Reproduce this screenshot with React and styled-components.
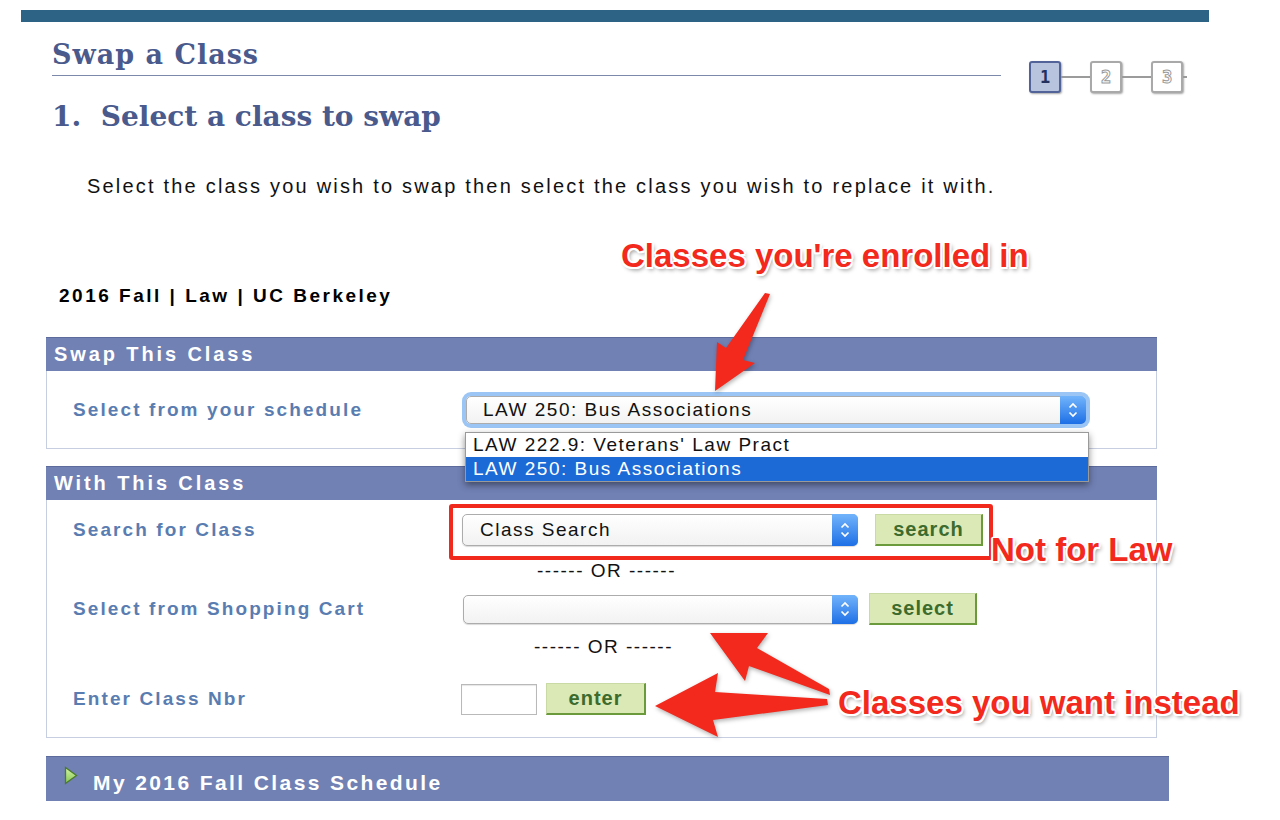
import React from 'react';
import styled, { createGlobalStyle } from 'styled-components';

const GlobalStyle = createGlobalStyle`
body {
  margin: 0;
  background: #ffffff;
  font-family: "Liberation Sans", Arial, sans-serif;
}
`

const Page = styled.div`
position: relative;
box-sizing: border-box;
width: 1280px;
height: 820px;
padding-top: 10px;
overflow: hidden;
`

const TopBar = styled.div`
margin-left: 21px;
width: 1188px;
height: 12px;
background: #2d6384;
`

const Content = styled.div`
margin-left: 46px;
`

const HeaderRow = styled.div`
display: flex;
align-items: flex-start;
margin-left: 6px;
`

const TitleBlock = styled.div`
width: 949px;
padding: 17px 0 4px;
border-bottom: 1px solid #7c89ab;
font-family: "DejaVu Serif", Georgia, serif;
font-weight: bold;
font-size: 27px;
letter-spacing: 1px;
line-height: 32px;
color: #4a5a8c;
`

const Steps = styled.div`
display: flex;
align-items: center;
margin: 39px 0 0 28px;
`

const StepBox = styled.div`
box-sizing: border-box;
width: 32px;
height: 32px;
display: flex;
align-items: center;
justify-content: center;
border: 2px solid ${p => (p.$active ? '#52639a' : '#a9a9a9')};
border-radius: 3px;
background: ${p => (p.$active ? '#b8c4dd' : '#ffffff')};
box-shadow: 1px 1px 2px rgba(0, 0, 0, 0.35);
font-family: "DejaVu Sans Mono", monospace;
font-weight: bold;
font-size: 17px;
color: ${p => (p.$active ? '#24315f' : '#ffffff')};
-webkit-text-stroke: ${p => (p.$active ? '0' : '1px #9a9a9a')};
`

const StepLine = styled.div`
width: ${p => p.$w}px;
height: 2px;
background: #9b9b9b;
`

const PageTitle = styled.h1`
margin: 6px 0 0 6px;
font-family: "DejaVu Serif", Georgia, serif;
font-weight: bold;
font-size: 28px;
line-height: 36px;
color: #4a5a8c;
`

const Instructions = styled.p`
margin: 39px 0 0 41px;
font-size: 20px;
line-height: 24px;
letter-spacing: 2.2px;
color: #111111;
`

const Term = styled.div`
margin: 86px 0 0 13px;
font-weight: bold;
font-size: 19px;
line-height: 24px;
letter-spacing: 2.5px;
color: #000000;
`

const Panel = styled.section`
width: ${p => p.$w}px;
margin-top: ${p => p.$mt}px;
`

const PanelHeader = styled.div`
box-sizing: border-box;
height: ${p => p.$h || 34}px;
display: flex;
align-items: center;
padding-left: 8px;
background: #7181b4;
border-top: 1px solid #5d6b9c;
color: #ffffff;
font-weight: bold;
font-size: 20px;
letter-spacing: 2.9px;
`

const PanelBody = styled.div`
display: flex;
flex-direction: column;
padding: ${p => p.$pad || '0'};
border: 1px solid #c7cee1;
border-top: none;
`

const Row = styled.div`
display: grid;
grid-template-columns: 415px 1fr;
align-items: center;
height: ${p => p.$h}px;
`

const Label = styled.div`
padding-left: 26px;
font-weight: bold;
font-size: 19px;
letter-spacing: 2.1px;
color: #5a7db1;
`

const Controls = styled.div`
position: relative;
display: flex;
align-items: center;
`

const OrLine = styled.div`
height: 30px;
line-height: 30px;
padding-left: ${p => 415 + p.$indent}px;
font-size: 19px;
letter-spacing: 1.5px;
color: #111111;
`

const SelectBox = styled.div`
box-sizing: border-box;
display: flex;
align-items: center;
width: ${p => p.$w}px;
height: ${p => p.$h}px;
margin-left: ${p => p.$ml || 0}px;
border: 1px solid #acacac;
border-radius: 5px;
background: linear-gradient(#ffffff, #f2f2f2);
box-shadow: ${p =>
  p.$focus ? '0 0 0 4px #9bc5f4' : '0 1px 1px rgba(0, 0, 0, 0.15)'};
font-size: 19px;
letter-spacing: 1.5px;
color: #111111;
`

const SelectText = styled.span`
flex: 1;
padding-left: ${p => p.$pl || 16}px;
white-space: nowrap;
`

const Stepper = styled.div`
align-self: stretch;
width: 26px;
display: flex;
align-items: center;
justify-content: center;
margin: -1px -1px -1px 0;
border-radius: 0 5px 5px 0;
background: linear-gradient(#72b4fb, #1d6fe6);
`

const Menu = styled.div`
position: absolute;
top: 36px;
left: 3px;
width: 622px;
background: #ffffff;
border: 1px solid #9a9a9a;
box-shadow: 0 3px 7px rgba(0, 0, 0, 0.45);
z-index: 2;
`

const MenuItem = styled.div`
height: 24px;
line-height: 24px;
padding-left: 7px;
font-size: 19px;
letter-spacing: 1.5px;
color: ${p => (p.$selected ? '#ffffff' : '#111111')};
background: ${p => (p.$selected ? '#1b6ad6' : '#ffffff')};
`

const GreenButton = styled.div`
box-sizing: border-box;
display: flex;
align-items: center;
justify-content: center;
width: ${p => p.$w}px;
height: 32px;
margin-left: ${p => p.$ml}px;
background: #dae9b6;
border: 1px solid #c9daa4;
border-right: 2px solid #6b9a3d;
border-bottom: 2px solid #6b9a3d;
color: #3d6b2d;
font-weight: bold;
font-size: 20px;
letter-spacing: 1px;
`

const NumberInput = styled.div`
box-sizing: border-box;
width: 76px;
height: 31px;
margin-left: -1px;
border: 1px solid #b9b9b9;
box-shadow: inset 0 1px 1px rgba(0, 0, 0, 0.1);
background: #ffffff;
`

const ScheduleBar = styled.div`
box-sizing: border-box;
display: flex;
align-items: flex-start;
width: 1123px;
height: 45px;
margin-top: 18px;
padding: 9px 0 0 18px;
background: #7181b4;
border-top: 1px solid #5d6b9c;
`

const ScheduleTitle = styled.span`
margin: 5px 0 0 15px;
line-height: 24px;
color: #ffffff;
font-weight: bold;
font-size: 21px;
letter-spacing: 2.4px;
`

/* red call-outs drawn on top of the form */
const Overlay = styled.div`
position: absolute;
inset: 0;
pointer-events: none;
z-index: 5;
`

const RedFrame = styled.div`
position: absolute;
left: 449px;
top: 504px;
width: 544px;
height: 56px;
box-sizing: border-box;
border: 4px solid #f1291d;
border-radius: 3px;
`

const Callout = styled.div`
position: absolute;
left: ${p => p.$x}px;
top: ${p => p.$y}px;
line-height: 40px;
white-space: nowrap;
font-weight: bold;
font-size: 33px;
color: #f2291c;
text-shadow: -1.5px -1.5px 0 #fff, 1.5px -1.5px 0 #fff, -1.5px 1.5px 0 #fff,
  1.5px 1.5px 0 #fff, 0 2px 0 #fff, 0 -2px 0 #fff, 2px 0 0 #fff, -2px 0 0 #fff,
  2px 3px 4px rgba(0, 0, 0, 0.45);
`

const ArrowLayer = styled.svg`
position: absolute;
left: 0;
top: 0;
filter: drop-shadow(1px 2px 2px rgba(0, 0, 0, 0.3));
`

const Chevrons = () => (
  <svg width="14" height="22" viewBox="0 0 14 22">
    <path d="M3.5 8.5 L7 5 L10.5 8.5" stroke="#fff" strokeWidth="1.7" fill="none" />
    <path d="M3.5 13.5 L7 17 L10.5 13.5" stroke="#fff" strokeWidth="1.7" fill="none" />
  </svg>
)

const Select = ({ text, w, h, ml, focus, pl }) => (
  <SelectBox $w={w} $h={h} $ml={ml} $focus={focus}>
    <SelectText $pl={pl}>{text}</SelectText>
    <Stepper><Chevrons /></Stepper>
  </SelectBox>
)

const ExpandIcon = () => (
  <svg width="14" height="19" viewBox="0 0 14 19">
    <defs>
      <linearGradient id="tri" x1="0" y1="0" x2="0" y2="1">
        <stop offset="0" stopColor="#d4f5a6" />
        <stop offset="1" stopColor="#86c652" />
      </linearGradient>
    </defs>
    <polygon points="1.5,1.5 12.5,9.5 1.5,17.5" fill="url(#tri)" stroke="#4b7a2f" strokeWidth="1.3" />
  </svg>
)

const App = () => {
  return (
    <>
      <GlobalStyle />
      <Page>
        <TopBar />
        <Content>
          <HeaderRow>
            <TitleBlock>Swap a Class</TitleBlock>
            <Steps>
              <StepBox $active>1</StepBox>
              <StepLine $w={29} />
              <StepBox>2</StepBox>
              <StepLine $w={29} />
              <StepBox>3</StepBox>
              <StepLine $w={4} />
            </Steps>
          </HeaderRow>
          <PageTitle>1.&nbsp; Select a class to swap</PageTitle>
          <Instructions>
            Select the class you wish to swap then select the class you wish to replace it with.
          </Instructions>
          <Term>2016 Fall | Law | UC Berkeley</Term>

          <Panel $w={1111} $mt={29}>
            <PanelHeader>Swap This Class</PanelHeader>
            <PanelBody>
              <Row $h={77}>
                <Label>Select from your schedule</Label>
                <Controls>
                  <Select text="LAW 250: Bus Associations" w={620} h={28} ml={4} focus />
                  <Menu>
                    <MenuItem>LAW 222.9: Veterans' Law Pract</MenuItem>
                    <MenuItem $selected>LAW 250: Bus Associations</MenuItem>
                  </Menu>
                </Controls>
              </Row>
            </PanelBody>
          </Panel>

          <Panel $w={1111} $mt={17}>
            <PanelHeader>With This Class</PanelHeader>
            <PanelBody $pad="4px 0 1px">
              <Row $h={52}>
                <Label>Search for Class</Label>
                <Controls>
                  <Select text="Class Search" w={396} h={32} pl={17} />
                  <GreenButton $w={108} $ml={17}>search</GreenButton>
                </Controls>
              </Row>
              <OrLine $indent={75}>------ OR ------</OrLine>
              <Row $h={46}>
                <Label>Select from Shopping Cart</Label>
                <Controls>
                  <Select text="" w={395} h={29} ml={1} />
                  <GreenButton $w={108} $ml={11}>select</GreenButton>
                </Controls>
              </Row>
              <OrLine $indent={72}>------ OR ------</OrLine>
              <Row $h={74}>
                <Label>Enter Class Nbr</Label>
                <Controls>
                  <NumberInput />
                  <GreenButton $w={100} $ml={9}>enter</GreenButton>
                </Controls>
              </Row>
            </PanelBody>
          </Panel>

          <ScheduleBar>
            <ExpandIcon />
            <ScheduleTitle>My 2016 Fall Class Schedule</ScheduleTitle>
          </ScheduleBar>
        </Content>

        <Overlay>
          <RedFrame />
          <ArrowLayer width="1280" height="820" viewBox="0 0 1280 820">
            <polygon fill="#f2291c" points="770,294 743,360 755,363 715,391 717,342 726,348 765,293" />
            <polygon fill="#f2291c" points="710,633 768,633 757,648 829,689 830,695 749,666 745,681" />
            <polygon fill="#f2291c" points="655,706 718,673 715,692 827,699 828,705 713,720 718,737" />
          </ArrowLayer>
          <Callout $x={621} $y={236}>Classes you're enrolled in</Callout>
          <Callout $x={991} $y={530}>Not for Law</Callout>
          <Callout $x={838} $y={683}>Classes you want instead</Callout>
        </Overlay>
      </Page>
    </>
  );
}

export default App;
